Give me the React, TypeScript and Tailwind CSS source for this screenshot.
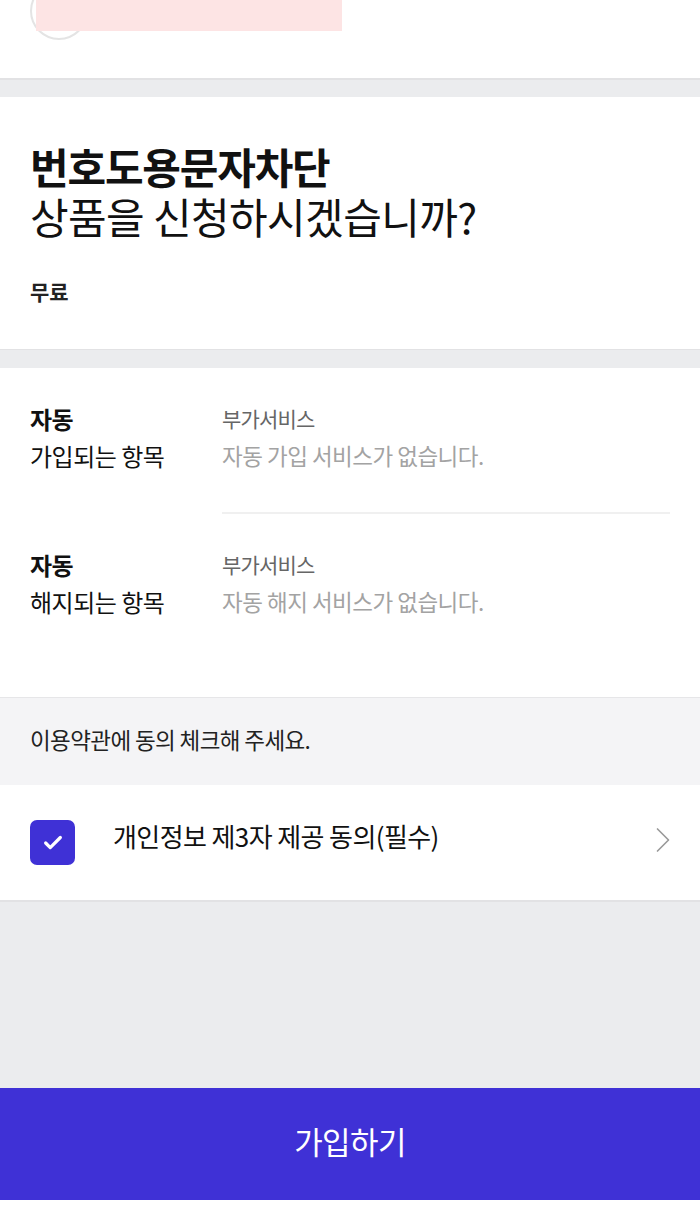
import React from 'react';
import { ChevronRight, Check } from 'lucide-react';

const font = { fontFamily: '"Noto Sans CJK KR", "Noto Sans", sans-serif' };

interface AutoRowProps {
  title: string;
  subtitle: string;
  label: string;
  desc: string;
}

const AutoRow: React.FC<AutoRowProps> = ({ title, subtitle, label, desc }) => (
  <div className="flex">
    <div className="w-[192px] shrink-0 text-[24px] leading-[37px] text-[#111] tracking-[-0.5px]">
      <div className="font-bold">{title}</div>
      <div>{subtitle}</div>
    </div>
    <div className="flex-1">
      <div className="text-[21px] leading-[37px] text-[#666] tracking-[-0.8px]">{label}</div>
      <div className="text-[22.5px] leading-[37px] text-[#a3a3a3] tracking-[-0.5px]">{desc}</div>
    </div>
  </div>
);

export default function App() {
  return (
    <div className="w-[700px] min-h-[1211px] bg-white flex flex-col" style={font}>
      {/* scrolled-off header remnant */}
      <div className="h-[78px] bg-white relative overflow-hidden">
        <div className="absolute left-[30px] top-[-18px] w-[58px] h-[58px] rounded-full border-2 border-[#e4e4e4]" />
        <div className="absolute left-[36px] top-0 w-[306px] h-[31px] bg-[#fde4e4]" />
      </div>
      <div className="h-[19px] bg-[#ebecee] border-t-2 border-[#e2e2e4]" />

      {/* product title */}
      <div className="bg-white px-[30px] pt-[44px] h-[252px]">
        <h1 className="text-[42px] leading-[50px] font-bold text-[#111] tracking-[-1.2px]">
          번호도용문자차단
          <br />
          <span className="font-normal tracking-[-0.6px]">상품을 신청하시겠습니까?</span>
        </h1>
        <div className="mt-[36px] text-[21px] leading-[28px] font-bold text-[#222]">무료</div>
      </div>
      <div className="h-[19px] bg-[#ebecee] border-t border-[#e2e2e4]" />

      {/* auto services */}
      <div className="bg-white pt-[32px] px-[30px] h-[329px]">
        <AutoRow title="자동" subtitle="가입되는 항목" label="부가서비스" desc="자동 가입 서비스가 없습니다." />
        <div className="ml-[192px] h-[2px] bg-[#f0f0f0] mt-[38px] mb-[32px]" />
        <AutoRow title="자동" subtitle="해지되는 항목" label="부가서비스" desc="자동 해지 서비스가 없습니다." />
      </div>

      {/* terms */}
      <div className="h-[88px] bg-[#f4f4f6] border-t border-[#e6e6e8] px-[30px] flex items-center">
        <span className="text-[22.5px] leading-[30px] text-[#222] tracking-[-0.6px] -mt-[6px]">이용약관에 동의 체크해 주세요.</span>
      </div>
      <div className="h-[115px] bg-white px-[30px] flex items-center">
        <div className="w-[45px] h-[45px] rounded-[7px] bg-[#3f31d6] flex items-center justify-center">
          <Check className="w-[22px] h-[22px] text-white" strokeWidth={3.5} />
        </div>
        <span className="ml-[38px] flex-1 text-[26px] leading-[34px] text-[#111] tracking-[-0.6px] -mt-[13px]">개인정보 제3자 제공 동의(필수)</span>
        <ChevronRight className="w-[44px] h-[44px] text-[#999] mr-[-15px] -mt-[6px]" strokeWidth={0.9} />
      </div>

      <div className="flex-1 min-h-[188px] bg-[#ebecee] border-t-2 border-[#e2e2e4]" />

      <button className="h-[112px] w-full bg-[#3f31d6] text-white text-[31px] leading-[40px] tracking-[-0.6px] pb-[6px]">가입하기</button>
      <div className="h-[11px] bg-white" />
    </div>
  );
}
